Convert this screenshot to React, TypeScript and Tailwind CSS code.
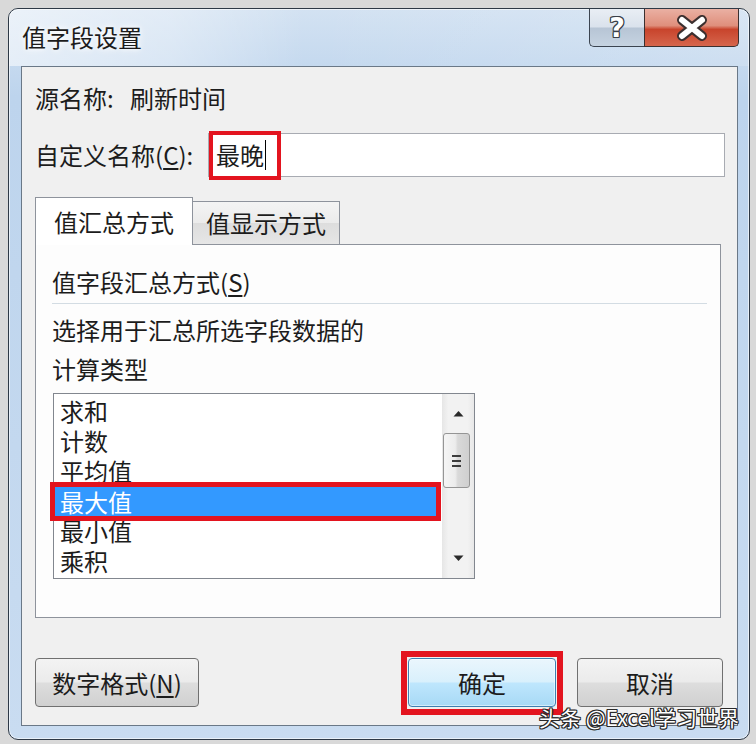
export default function App() {
  const items = ["求和", "计数", "平均值", "最大值", "最小值", "乘积"];
  return (
    <div className="relative w-[756px] h-[744px] overflow-hidden bg-[#d9d9d9] pt-[8px] pl-[8px] font-['Noto_Sans_CJK_SC','Noto_Sans',sans-serif] text-[#1c1c1c]">
      {/* window */}
      <div className="w-[742px] h-[732px] rounded-[10px] border border-[#2e3946] bg-[linear-gradient(180deg,#d3e2f2_0%,#bdd4ed_12%,#c3d8ef_60%,#c9dcf1_100%)] shadow-[inset_0_0_0_1px_rgba(255,255,255,0.6)] flex flex-col">
        {/* title bar */}
        <div className="h-[57px] flex items-start rounded-t-[9px] bg-[linear-gradient(90deg,rgba(255,255,255,0.55)_0%,rgba(255,255,255,0.35)_22%,rgba(255,255,255,0)_40%,rgba(255,255,255,0.15)_100%)]">
          <div className="pl-[13px] h-[56px] flex items-center text-[24px] leading-[32px] [text-shadow:0_0_8px_#ffffff,0_0_4px_#ffffff]">
            值字段设置
          </div>
          <div className="ml-auto mr-[10px] flex">
            <div className="w-[55px] h-[38px] rounded-bl-[5px] border border-t-0 border-r-0 border-[#3b4450] bg-[linear-gradient(180deg,#e9eef4_0%,#dae2ec_48%,#b7c5d5_52%,#c6d3e1_100%)] flex items-center justify-center">
              <span className="font-['DejaVu_Sans',sans-serif] font-bold text-[27px] leading-none text-white [text-shadow:1px_1px_0_#3a3f48,-1px_-1px_0_#3a3f48,1px_-1px_0_#3a3f48,-1px_1px_0_#3a3f48,0_1px_0_#3a3f48,0_-1px_0_#3a3f48,1px_0_0_#3a3f48,-1px_0_0_#3a3f48]">?</span>
            </div>
            <div className="w-[95px] h-[38px] rounded-br-[5px] border border-t-0 border-[#3b3030] bg-[linear-gradient(180deg,#eab0a3_0%,#df8f7c_45%,#c8442c_55%,#d6664d_100%)] flex items-center justify-center">
              <svg width="36" height="26" viewBox="0 0 36 26">
                <path d="M8 5 L28 21 M28 5 L8 21" stroke="#3b2f2f" strokeWidth="10" strokeLinecap="round" fill="none" />
                <path d="M8 5 L28 21 M28 5 L8 21" stroke="#ffffff" strokeWidth="6" strokeLinecap="round" fill="none" />
              </svg>
            </div>
          </div>
        </div>

        {/* client area */}
        <div className="ml-[12px] mr-[11px] h-[660px] border border-[#6a7887] bg-[#f0f0f0] pl-[13px] pr-[12px] flex flex-col">
          {/* source name */}
          <div className="mt-[11px] h-[40px] flex items-center text-[24px] leading-[40px]">
            <span className="w-[95px]">源名称:</span>
            <span>刷新时间</span>
          </div>

          {/* custom name */}
          <div className="mt-[15px] h-[44px] flex items-center text-[24px]">
            <span className="w-[173px] leading-[44px]">
              自定义名称(<span className="underline underline-offset-[3px]">C</span>):
            </span>
            <div className="relative w-[517px] h-[44px] border border-[#a8abb2] bg-white flex items-center pl-[7px]">
              <span className="leading-[40px]">最晚</span>
              <span className="ml-[1px] w-[1px] h-[30px] bg-black" />
              <div className="absolute left-[0px] top-[-3px] w-[72px] h-[49px] border-[4px] border-[#e3141f]" />
            </div>
          </div>

          {/* tabs */}
          <div className="mt-[20px] h-[47px] flex items-end text-[24px]">
            <div className="relative z-10 w-[158px] h-[48px] mb-[-1px] border border-b-0 border-[#8e939c] bg-white flex items-center justify-center leading-[40px]">
              值汇总方式
            </div>
            <div className="w-[147px] h-[43px] border border-l-0 border-b-0 border-[#8e939c] bg-[linear-gradient(180deg,#f4f4f4_0%,#ebebeb_50%,#dddddd_51%,#e6e6e6_100%)] flex items-center justify-center leading-[40px]">
              值显示方式
            </div>
          </div>

          {/* panel */}
          <div className="w-[686px] h-[374px] border border-[#8e939c] bg-[#fdfdfd] flex flex-col text-[24px]">
            <div className="mt-[21px] ml-[16px] leading-[32px]">
              值字段汇总方式(<span className="underline underline-offset-[3px]">S</span>)
            </div>
            <div className="mt-[5px] ml-[16px] mr-[13px] h-[1px] bg-[#d3dce3]" />
            <div className="mt-[6px] ml-[16px] leading-[39px]">
              <div>选择用于汇总所选字段数据的</div>
              <div>计算类型</div>
            </div>
            {/* listbox */}
            <div className="mt-[5px] ml-[17px] w-[422px] h-[186px] border border-[#82878f] bg-white flex">
              <div className="flex-1 pt-[2px]">
                {items.map((it, i) =>
                  i === 3 ? (
                    <div key={it} className="h-[30px] pt-[1px] pl-[1px] pr-[6px]">
                      <div className="relative h-[29px] bg-[#3399ff] text-white pl-[5px] leading-[29px]">
                        {it}
                        <div className="absolute -left-[5px] -top-[5px] -right-[5px] -bottom-[5px] border-[5px] border-[#e3141f]" />
                      </div>
                    </div>
                  ) : (
                    <div key={it} className="h-[30px] pl-[6px] leading-[30px]">
                      {it}
                    </div>
                  )
                )}
              </div>
              {/* scrollbar */}
              <div className="w-[32px] h-full bg-[linear-gradient(90deg,#e6e6e6_0%,#f2f2f2_20%,#f2f2f2_80%,#e8e8e8_100%)] flex flex-col items-center">
                <div className="h-[39px] w-full flex items-center justify-center">
                  <svg width="11" height="7" viewBox="0 0 11 7">
                    <path d="M0.5 6.5 L5.5 1 L10.5 6.5 Z" fill="#2a2a2a" />
                  </svg>
                </div>
                <div className="w-[27px] h-[55px] mr-[3px] rounded-[3px] border border-[#959595] bg-[linear-gradient(90deg,#f5f5f5_0%,#ececec_45%,#d9d9d9_55%,#cfcfcf_100%)] flex flex-col items-center justify-center gap-[3px]">
                  <div className="w-[9px] h-[2px] bg-[#3c3c3c]" />
                  <div className="w-[9px] h-[2px] bg-[#3c3c3c]" />
                  <div className="w-[9px] h-[2px] bg-[#3c3c3c]" />
                </div>
                <div className="flex-1" />
                <div className="h-[40px] w-full flex items-center justify-center">
                  <svg width="11" height="7" viewBox="0 0 11 7">
                    <path d="M0.5 0.5 L5.5 6 L10.5 0.5 Z" fill="#2a2a2a" />
                  </svg>
                </div>
              </div>
            </div>
          </div>

          {/* buttons */}
          <div className="mt-[40px] h-[49px] flex text-[24px]">
            <div className="w-[164px] h-[49px] rounded-[4px] border border-[#707070] bg-[linear-gradient(180deg,#f3f3f3_0%,#ebebeb_48%,#dddddd_52%,#d0d0d0_100%)] flex items-center justify-center leading-[40px]">
              数字格式(<span className="underline underline-offset-[3px]">N</span>)
            </div>
            <div className="relative ml-[209px] w-[148px] h-[49px] rounded-[4px] border border-[#3c7fb1] bg-[linear-gradient(180deg,#eaf6fd_0%,#d9f0fc_48%,#bee6fd_52%,#a7d9f5_100%)] shadow-[inset_0_0_0_1px_rgba(255,255,255,0.5)] flex items-center justify-center leading-[40px]">
              确定
              <div className="absolute -left-[8px] -top-[8px] -right-[8px] -bottom-[9px] border-[6px] border-[#e3141f]" />
            </div>
            <div className="ml-[21px] w-[146px] h-[49px] rounded-[4px] border border-[#707070] bg-[linear-gradient(180deg,#f3f3f3_0%,#ebebeb_48%,#dddddd_52%,#d0d0d0_100%)] flex items-center justify-center leading-[40px]">
              取消
            </div>
          </div>
        </div>
      </div>

      {/* watermark */}
      <div className="absolute left-[539px] top-[703px] text-[21px] leading-[28px] text-white whitespace-nowrap [text-shadow:1px_1px_0_#2a2a2a,-1px_-1px_0_#2a2a2a,1px_-1px_0_#2a2a2a,-1px_1px_0_#2a2a2a,0_1px_0_#2a2a2a,0_-1px_0_#2a2a2a,1px_0_0_#2a2a2a,-1px_0_0_#2a2a2a]">
        头条 @Excel学习世界
      </div>
    </div>
  );
}
